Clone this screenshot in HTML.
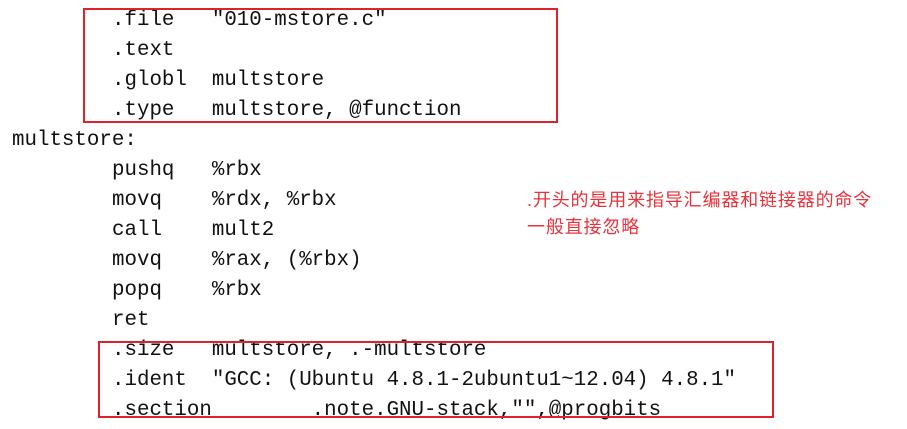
<!DOCTYPE html>
<html><head><meta charset="utf-8"><style>
body{margin:0;width:907px;height:429px;background:#fff;position:relative;overflow:hidden}
pre{position:absolute;margin:0;font-family:"Liberation Mono",monospace;font-size:20.8px;line-height:30px;color:#111;white-space:pre}
.box{position:absolute;border:2px solid #e0202a;box-sizing:border-box}
.cn{position:absolute;left:527px;font-family:"Liberation Sans","Noto Sans CJK SC",sans-serif;font-size:18px;letter-spacing:0.85px;color:#e8323c;line-height:27px}
</style></head><body>
<pre style="left:112px;top:6px">.file   "010-mstore.c"
.text
.globl  multstore
.type   multstore, @function</pre>
<pre style="left:12px;top:126px">multstore:</pre>
<pre style="left:112px;top:156px">pushq   %rbx
movq    %rdx, %rbx
call    mult2
movq    %rax, (%rbx)
popq    %rbx
ret
.size   multstore, .-multstore
.ident  "GCC: (Ubuntu 4.8.1-2ubuntu1~12.04) 4.8.1"
.section        .note.GNU-stack,"",@progbits</pre>
<div class="box" style="left:83px;top:8px;width:475px;height:115px"></div>
<div class="box" style="left:98px;top:341px;width:676px;height:77px"></div>
<div class="cn" style="top:187px">.开头的是用来指导汇编器和链接器的命令<br>一般直接忽略</div>
</body></html>
